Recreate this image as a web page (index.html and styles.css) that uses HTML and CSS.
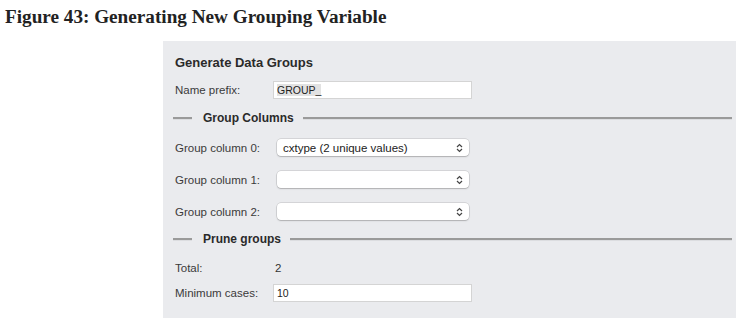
FILE: index.html
```html
<!DOCTYPE html>
<html lang="en">
<head>
    <meta charset="UTF-8">
    <title>Generating New Grouping Variable</title>
    <link rel="stylesheet" href="styles.css">
</head>
<body>
    <h1 class="fig-title">Figure 43: Generating New Grouping Variable</h1>

    <div class="panel">
        <div class="panel-title">Generate Data Groups</div>

        <div class="row row-prefix">
            <span class="label">Name prefix:</span>
            <div class="text-input"><span class="sel">GROUP_</span></div>
        </div>

        <!-- Group columns -->
        <div class="section">
            <span class="rule rule-short"></span>
            <span class="section-title">Group Columns</span>
            <span class="rule rule-long"></span>
        </div>

        <div class="row row-select first">
            <span class="label">Group column 0:</span>
            <div class="select">
                <span class="select-text">cxtype (2 unique values)</span>
                <svg class="updown" width="7" height="10" viewBox="0 0 7 10"><path d="M1 4 L3.5 1.5 L6 4 M1 6 L3.5 8.5 L6 6" fill="none" stroke="#444" stroke-width="1.2"/></svg>
            </div>
        </div>
        <div class="row row-select">
            <span class="label">Group column 1:</span>
            <div class="select">
                <span class="select-text"></span>
                <svg class="updown" width="7" height="10" viewBox="0 0 7 10"><path d="M1 4 L3.5 1.5 L6 4 M1 6 L3.5 8.5 L6 6" fill="none" stroke="#444" stroke-width="1.2"/></svg>
            </div>
        </div>
        <div class="row row-select">
            <span class="label">Group column 2:</span>
            <div class="select">
                <span class="select-text"></span>
                <svg class="updown" width="7" height="10" viewBox="0 0 7 10"><path d="M1 4 L3.5 1.5 L6 4 M1 6 L3.5 8.5 L6 6" fill="none" stroke="#444" stroke-width="1.2"/></svg>
            </div>
        </div>

        <!-- Prune groups -->
        <div class="section section-prune">
            <span class="rule rule-short"></span>
            <span class="section-title">Prune groups</span>
            <span class="rule rule-long"></span>
        </div>

        <div class="row row-total">
            <span class="label">Total:</span>
            <span class="value">2</span>
        </div>
        <div class="row row-min">
            <span class="label">Minimum cases:</span>
            <div class="text-input">10</div>
        </div>
    </div>
</body>
</html>
```

FILE: styles.css
```css
body {
    margin: 0;
    background: #fff;
    font-family: "Liberation Sans", Arial, sans-serif;
    color: #3a3a3a;
}
.fig-title {
    font-family: "Liberation Serif", "Times New Roman", serif;
    font-size: 19.2px;
    line-height: 22px;
    font-weight: bold;
    color: #222;
    margin: 6px 0 0 5px;
}
.panel {
    margin: 13px 0 0 163px;
    width: 573px;
    height: 277px;
    box-sizing: border-box;
    padding: 15px 0 0 12px;
    background: #eaebee;
}
.panel-title {
    font-size: 13px;
    line-height: 14px;
    font-weight: bold;
    color: #2a2a2a;
}
.row {
    display: flex;
    align-items: center;
    height: 18px;
    font-size: 11.5px;
}
.label {
    width: 98px;
    flex: none;
}
.row-prefix {
    margin-top: 11px;
}
.text-input {
    width: 199px;
    height: 18px;
    box-sizing: border-box;
    background: #fff;
    border: 1px solid #d4d4d4;
    padding: 0 3px;
    line-height: 16px;
    font-size: 10.5px;
    color: #222;
}
.sel {
    background: #e2e2e2;
}
.section {
    display: flex;
    align-items: center;
    height: 16px;
    margin: 11px 0 0 -2px;
    padding-right: 4px;
}
.section-prune {
    margin-top: 11px;
}
.rule {
    height: 2px;
    background: #9a9a9a;
    border-bottom: 1px solid #dcdde0;
}
.rule-short {
    width: 19px;
    margin-right: 11px;
}
.rule-long {
    flex: 1;
    margin-left: 9px;
}
.section-title {
    font-size: 12px;
    font-weight: bold;
    color: #2a2a2a;
}
.row-select {
    height: 17px;
    margin-top: 15px;
}
.row-select.first {
    margin-top: 13px;
}
.select {
    margin-left: 4px;
    width: 192px;
    height: 17px;
    box-sizing: border-box;
    background: #fff;
    border-radius: 4px;
    box-shadow: 0 0 0 0.5px rgba(0, 0, 0, 0.18), 0 1px 1.5px rgba(0, 0, 0, 0.18);
    display: flex;
    align-items: center;
    padding: 0 6px 0 6px;
}
.select-text {
    flex: 1;
    font-size: 11.5px;
    color: #222;
}
.row-total {
    height: 17px;
    margin-top: 12px;
}
.value {
    margin-left: 2px;
    color: #333;
}
.row-min {
    margin-top: 8px;
}
```
